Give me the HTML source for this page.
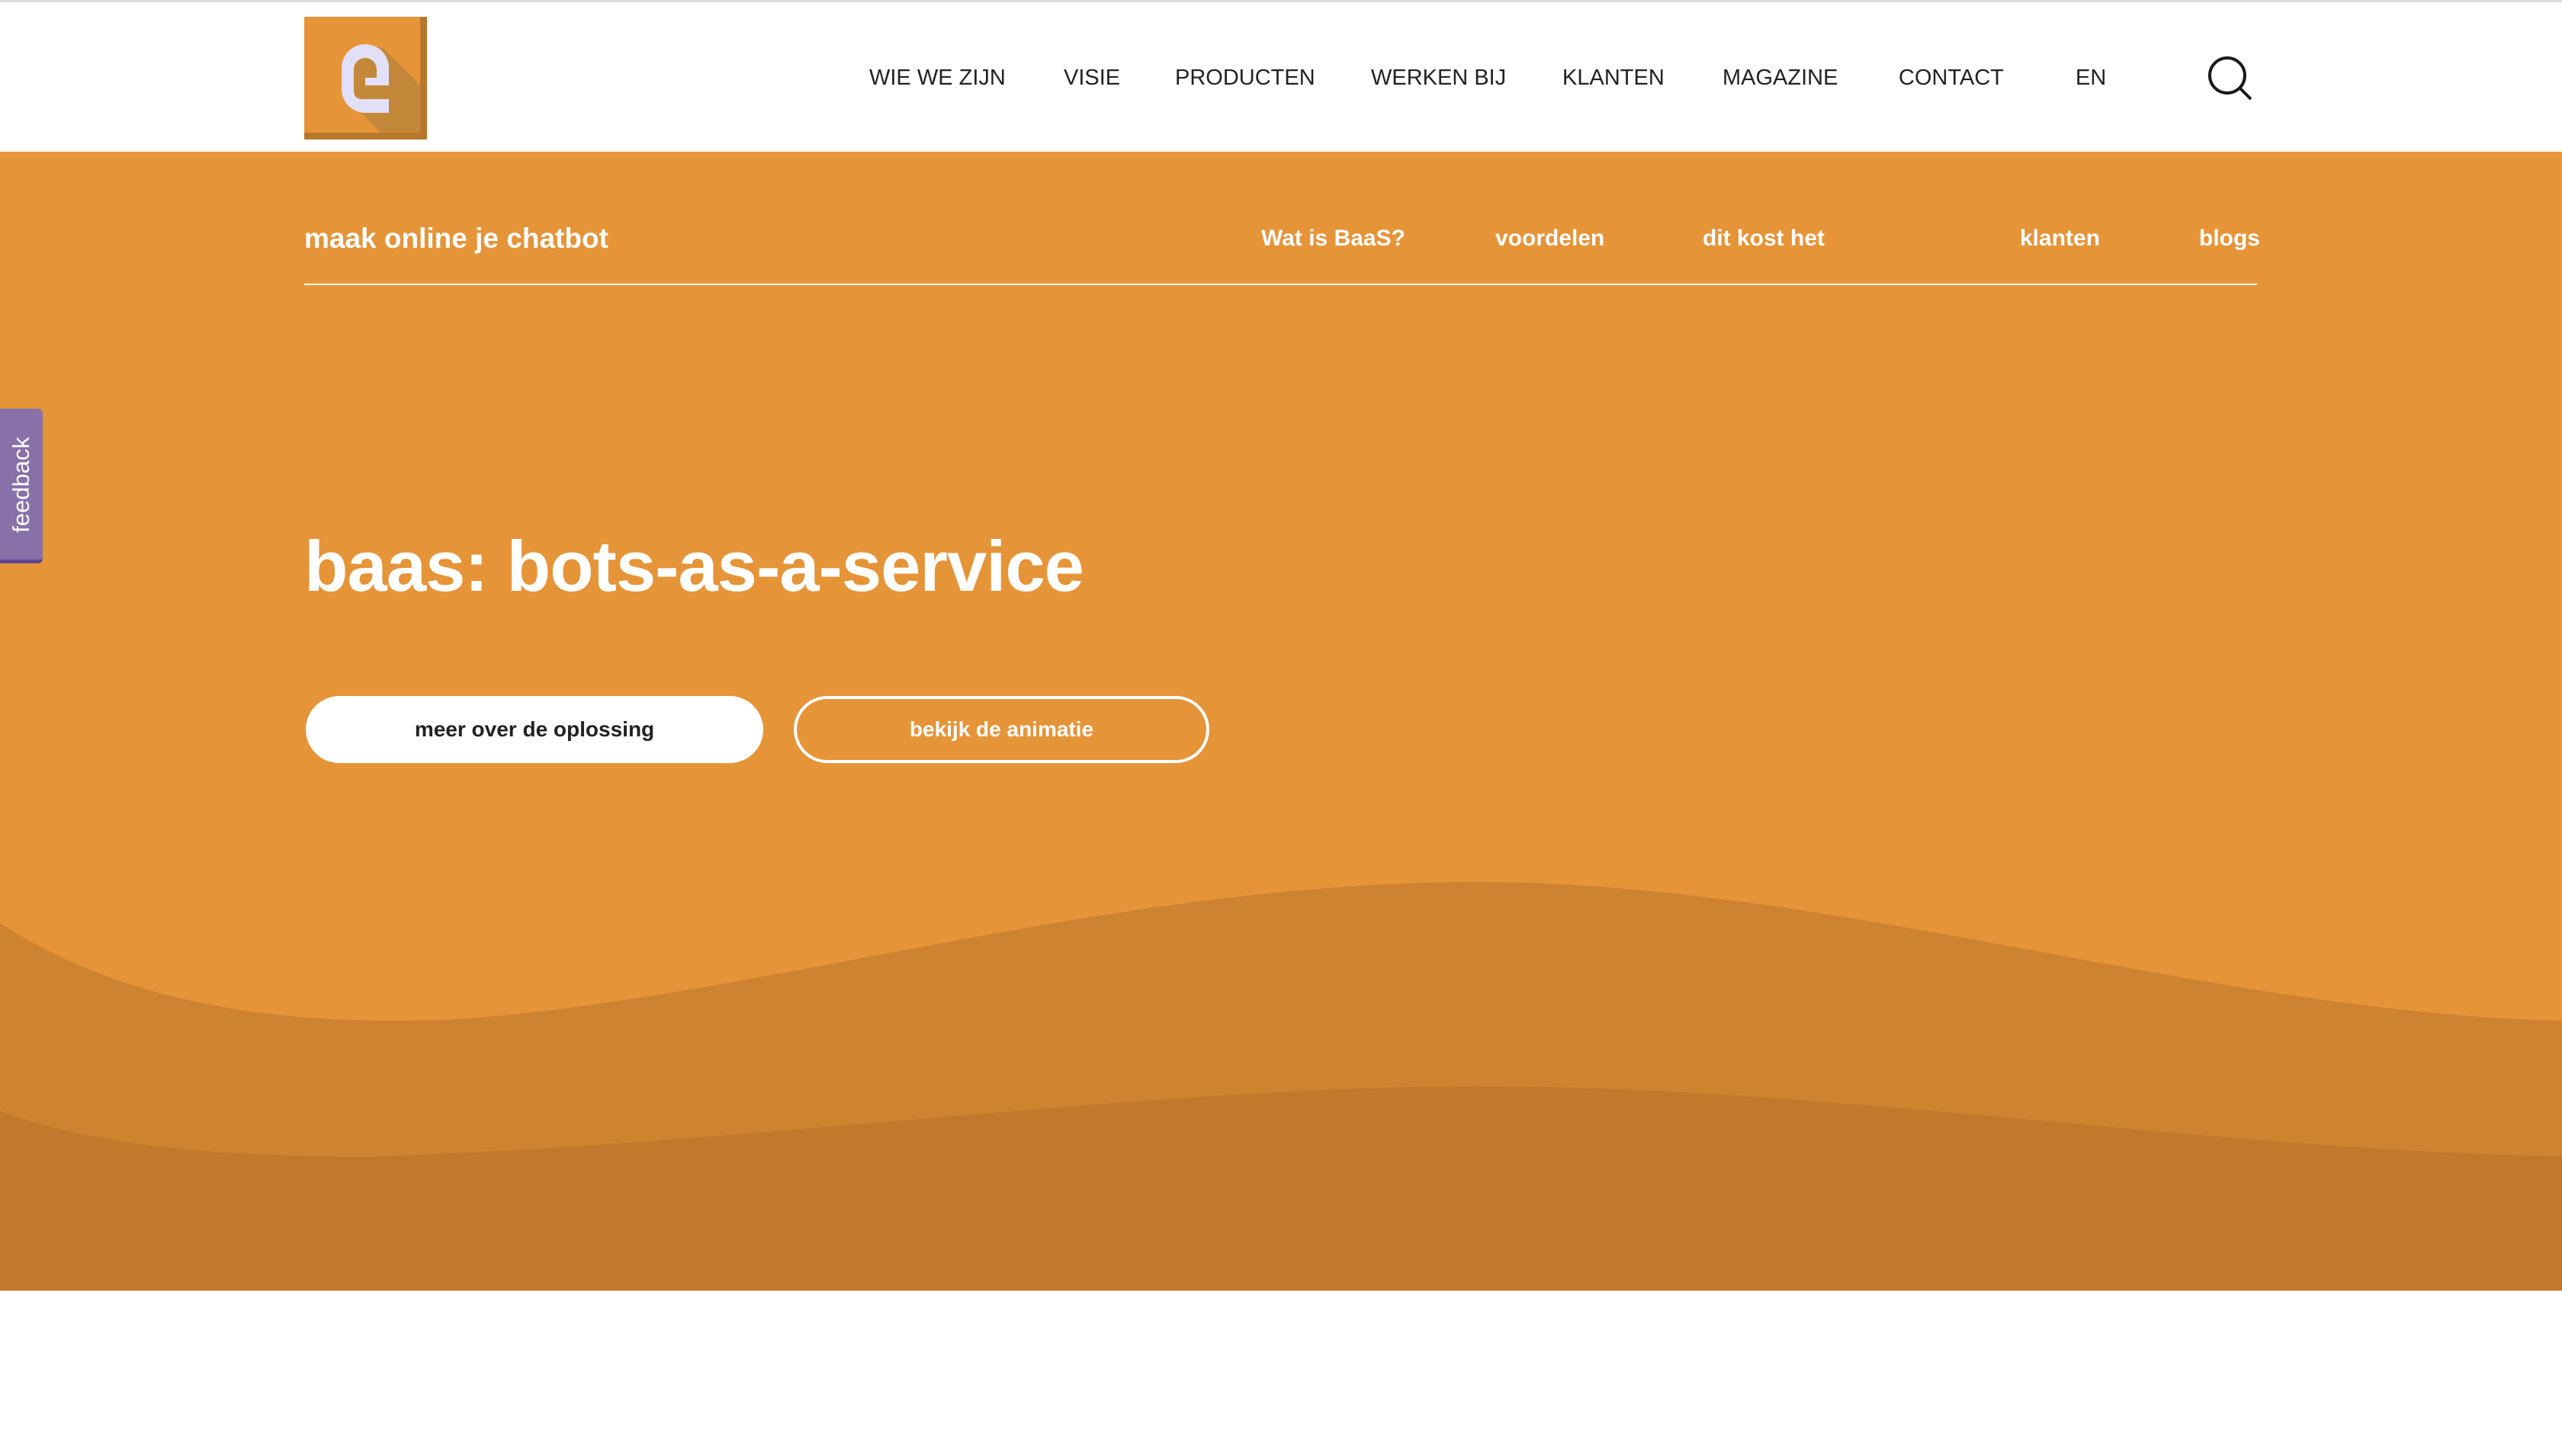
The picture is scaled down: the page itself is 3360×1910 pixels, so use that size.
<!DOCTYPE html>
<html><head><meta charset="utf-8"><style>
*{margin:0;padding:0;box-sizing:border-box}
body{width:3360px;height:1910px;background:#fff;font-family:"Liberation Sans",sans-serif;position:relative;overflow:hidden}
.top{position:absolute;left:0;top:0;width:3360px;height:3px;background:#ddd}
.nav a{position:absolute;top:86px;font-size:29px;color:#222;text-decoration:none;white-space:nowrap}
.hero{position:absolute;left:0;top:199px;width:3360px;height:1494px;background:#E69438;overflow:hidden}
.sub{position:absolute;font-weight:bold;color:#fff;white-space:nowrap}
.btn{position:absolute;top:913px;height:88px;border-radius:44px;font-weight:bold;font-size:28px;display:flex;align-items:center;justify-content:center}
</style></head><body>
<div class="top"></div>
<svg style="position:absolute;left:399px;top:22px" width="161" height="161" viewBox="0 0 161 161">
<rect width="161" height="161" fill="#E69438"/>
<polygon points="80,36 105,42 152,90 152,152 100,152 49,100" fill="#C4883A"/>
<rect x="152" y="0" width="9" height="161" fill="#B8782C"/>
<rect x="0" y="152" width="161" height="9" fill="#B8782C"/>
<path d="M49 67 A31 31 0 0 1 111 67 L111 90 L80 90 L80 108 L111 108 L111 126 L80 126 A31 31 0 0 1 49 95 Z" fill="#E2E0F8"/>
<path d="M65 69 A15 15 0 0 1 95 69 L95 80 L80 80 L80 108 L76 108 Q65 108 65 97 Z" fill="#C4883A"/>
<rect x="80" y="90" width="31" height="18" fill="#C4883A"/>
</svg>
<div class="nav">
<a style="left:1140px">WIE WE ZIJN</a><a style="left:1395px">VISIE</a><a style="left:1541px">PRODUCTEN</a><a style="left:1798px">WERKEN BIJ</a><a style="left:2049px">KLANTEN</a><a style="left:2259px">MAGAZINE</a><a style="left:2490px">CONTACT</a><a style="left:2722px">EN</a>
</div>
<svg style="position:absolute;left:2892px;top:70px" width="70" height="66" viewBox="0 0 70 66"><circle cx="29" cy="29" r="23" fill="none" stroke="#1a1a1a" stroke-width="4"/><line x1="46" y1="46" x2="60" y2="60" stroke="#1a1a1a" stroke-width="4"/></svg>
<div class="hero">
<svg style="position:absolute;left:0;top:0" width="3360" height="1494" viewBox="0 0 3360 1494">
<path d="M0 1012 C150 1110 350 1150 600 1138 C1000 1110 1450 960 1929 958 C2400 956 2900 1130 3360 1140 L3360 1494 L0 1494Z" fill="#CD8330"/>
<path d="M0 1258 C120 1305 300 1320 500 1318 C1000 1300 1500 1228 1929 1226 C2400 1225 2900 1310 3360 1318 L3360 1494 L0 1494Z" fill="#C1792B"/>
</svg>
<div class="sub" style="left:399px;top:93px;font-size:37px">maak online je chatbot</div>
<div class="sub" style="left:1654px;top:97px;font-size:30px">Wat is BaaS?</div>
<div class="sub" style="left:1961px;top:97px;font-size:30px">voordelen</div>
<div class="sub" style="left:2233px;top:97px;font-size:30px">dit kost het</div>
<div class="sub" style="left:2649px;top:97px;font-size:30px">klanten</div>
<div class="sub" style="left:2884px;top:97px;font-size:30px">blogs</div>
<div style="position:absolute;left:399px;top:173px;width:2561px;height:2px;background:#fff"></div>
<div class="sub" style="left:399px;top:490px;font-size:94px;letter-spacing:-1px">baas: bots-as-a-service</div>
<div class="btn" style="left:401px;top:714px;width:600px;background:#fff;color:#222">meer over de oplossing</div>
<div class="btn" style="left:1041px;top:714px;width:545px;border:4px solid #fff;color:#fff">bekijk de animatie</div>
</div>
<div style="position:absolute;left:0;top:536px;width:56px;height:203px;background:#8870A8;border-radius:0 6px 6px 0;border-bottom:5px solid #5E4690"></div>
<div style="position:absolute;left:28px;top:636px;transform:translate(-50%,-50%) rotate(-90deg);color:#fff;font-size:31px;white-space:nowrap">feedback</div>
</body></html>
